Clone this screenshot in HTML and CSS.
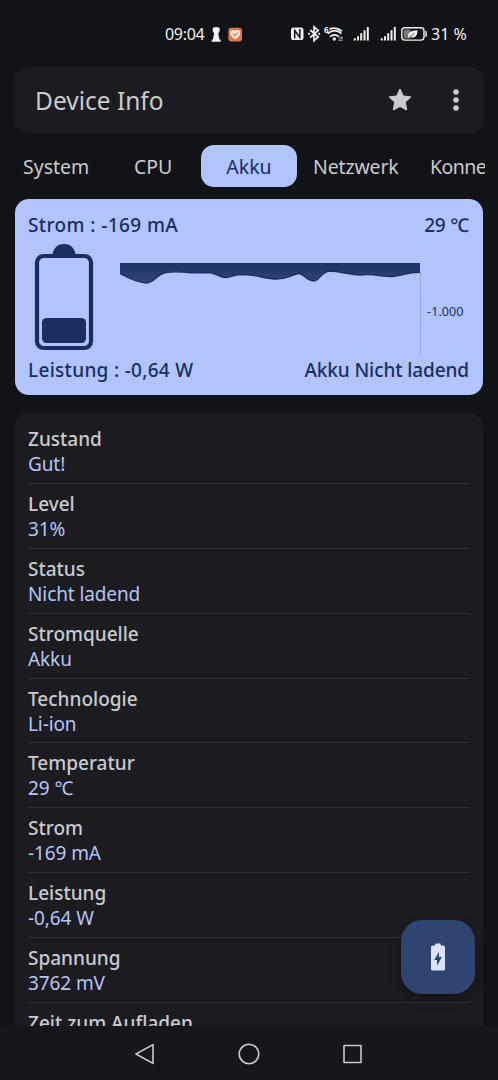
FILE: index.html
```html
<!DOCTYPE html>
<html lang="de">
<head>
<meta charset="utf-8">
<title>Device Info</title>
<link rel="stylesheet" href="styles.css">
</head>
<body>
<div class="screen">
  <div class="status">
    <span class="clock">09:04</span>
    <svg class="notify" width="34" height="20" viewBox="0 0 34 20">
      <path d="M4.600 3.200C4.600 1.800 6 1 8.200 1s3.600.8 3.600 2.200c0 1.600-.7 3-1.500 4l1.100 6.200h1.200v2.300H3.800v-2.300H5l1.100-6.200c-.8-1-1.500-2.400-1.500-4z" fill="#f3f3f5"/>
      <rect x="20.300" y="1.700" width="13.700" height="13.700" rx="3" fill="#d9774d"/>
      <path d="M27.200 13.500c-3-2-5-4-5-6.500 0-3 3.600-4 5-1.700 1.400-2.300 5-1.300 5 1.700 0 2.500-2 4.500-5 6.500z" fill="#ffe9cf"/>
      <path d="M24.900 7.700l2 2 3-3" fill="none" stroke="#c87b50" stroke-width="1.200"/>
    </svg>
    <svg class="radios" width="136" height="20" viewBox="0 0 136 20">
      <rect x="0" y="2.500" width="12.500" height="12.500" rx="2.600" fill="#efeff1"/>
      <path d="M3.700 13.500v-8l5.100 6.800V4" fill="none" stroke="#121316" stroke-width="1.500"/>
      <path d="M19.200 5l8 7-4.200 3.700V1.800L27.200 5.500l-8 7" fill="none" stroke="#efeff1" stroke-width="1.700"/>
      <circle cx="18" cy="8.800" r="1.100" fill="#efeff1"/><circle cx="28.200" cy="8.800" r="1.100" fill="#efeff1"/>
      <g fill="none" stroke="#efeff1" stroke-width="1.800"><path d="M38.500 4.200q6.500-2.700 12.500 2M36.500 8.600q7.500-6 14 0M39 11.600q4.500-3.500 9 0"/></g>
      <circle cx="43.300" cy="14" r="1.700" fill="#efeff1"/>
      <text class="wifi-generation" x="33" y="8">6</text>
      <path d="M47.500 13h4m-1.500-1.200 1.700 1.200M51.500 15.200h-4" fill="none" stroke="#efeff1" stroke-width=".8"/>
      <g fill="#efeff1"><path id="bars" d="M62.800 13.200h2v2.300h-2zM66 11.200h2v4.300h-2zM69.200 8.200h2v7.300h-2zM72.500 5.200h2v10.300h-2zM75.800 2h2v13.500h-2z"/><use href="#bars" x="27"/></g>
      <rect x="110.800" y="2.700" width="22.200" height="12.400" rx="3" fill="none" stroke="#efeff1" stroke-width="1.400"/>
      <rect x="112.600" y="4.400" width="7" height="9" rx="1" fill="#77787a"/>
      <path d="M117.500 12.700c-1.500-5.500 3-7 9-7.400 0 5.800-2.500 8.300-7 6.600l-1.200 1.200z" fill="#efeff1"/>
      <path d="M118.500 12.200l5-4" stroke="#333538" stroke-width=".8"/>
      <rect x="134.300" y="5.900" width="1.500" height="6" rx=".7" fill="#efeff1"/>
    </svg>
    <span class="percent">31 %</span>
  </div>

  <header class="appbar">
    <h1>Device Info</h1>
    <svg class="star" width="24" height="24" viewBox="0 0 24 24"><path d="M12 1.700l3 6.500 7.300.8-5.400 5 1.500 7.500L12 18l-6.400 3.500L7.100 14l-5.400-5 7.300-.8z" fill="#c9cad0" stroke="#c9cad0" stroke-width="1.600" stroke-linejoin="round"/></svg>
    <svg class="more" width="6" height="24" viewBox="0 0 6 24" fill="#c9cad0"><circle cx="3" cy="4" r="2.800"/><circle cx="3" cy="12" r="2.800"/><circle cx="3" cy="20" r="2.800"/></svg>
  </header>

  <nav class="tabs">
    <span class="tab tab-system">System</span>
    <span class="tab tab-cpu">CPU</span>
    <span class="tab tab-active">Akku</span>
    <span class="tab tab-network">Netzwerk</span>
    <span class="tab tab-connect">Konne</span>
  </nav>

  <section class="summary">
    <div class="pair"><span class="current">Strom : -169 mA</span><span class="temp">29 ℃</span></div>
    <div class="visual">
      <svg width="60" height="108" viewBox="0 0 60 108">
        <path d="M18 12C20 4 24 1 30 1s10 3 12 11z" fill="#192f60"/>
        <rect x="3" y="13" width="54" height="92" rx="6.500" fill="none" stroke="#192f60" stroke-width="4.200"/>
        <rect x="8" y="75" width="44" height="25" rx="4.500" fill="#192f60"/>
      </svg>
      <svg class="chart" width="302" height="96" viewBox="0 0 302 96">
        <defs><linearGradient id="area" x1="0" y1="0" x2="0" y2="1"><stop offset="0" stop-color="#1b3264"/><stop offset="1" stop-color="#304877"/></linearGradient></defs>
        <path d="M0 3H300V12.500C290 12 282 15.500 272 16.500C264 17.500 256 13.500 240 15C230 14.500 220 11.500 210 11C200 12 200 21 194 21C186 21 184 13 178 13.500C172 15 168 19 157 19C145 19 137 14.500 121 14.500C112 15 111 17.500 106 17.500C99 17.500 95 13 90 12.500C82 12.500 76 13.500 68 12.500C59 12 48 10.500 42 14C36 17 33 23 26 23C18 22 8 18 0 13.500Z" fill="url(#area)"/>
        <path d="M300 12.500C290 12 282 15.500 272 16.500C264 17.500 256 13.500 240 15C230 14.500 220 11.500 210 11C200 12 200 21 194 21C186 21 184 13 178 13.500C172 15 168 19 157 19C145 19 137 14.500 121 14.500C112 15 111 17.500 106 17.500C99 17.500 95 13 90 12.500C82 12.500 76 13.500 68 12.500C59 12 48 10.500 42 14C36 17 33 23 26 23C18 22 8 18 0 13.500" fill="none" stroke="#192f60" stroke-width="1.300"/>
        <path d="M300.500 12v83" stroke="#98aad8" stroke-width="1"/>
      </svg>
      <span class="axis">-1.000</span>
    </div>
    <div class="pair"><span class="power">Leistung : -0,64 W</span><span class="state">Akku Nicht ladend</span></div>
  </section>

  <section class="details">
    <div class="row"><b>Zustand</b><span>Gut!</span></div>
    <div class="row"><b>Level</b><span>31%</span></div>
    <div class="row"><b>Status</b><span>Nicht ladend</span></div>
    <div class="row"><b>Stromquelle</b><span>Akku</span></div>
    <div class="row"><b>Technologie</b><span>Li-ion</span></div>
    <div class="row"><b>Temperatur</b><span>29 ℃</span></div>
    <div class="row"><b>Strom</b><span>-169 mA</span></div>
    <div class="row"><b>Leistung</b><span>-0,64 W</span></div>
    <div class="row"><b>Spannung</b><span>3762 mV</span></div>
    <div class="row"><b>Zeit zum Aufladen</b></div>
  </section>

  <footer class="system-nav">
    <svg width="24" height="24" viewBox="0 0 24 24"><path d="M20 2.600v18.800L3 12z"/></svg>
    <svg width="24" height="24" viewBox="0 0 24 24"><circle cx="12" cy="12" r="9.800"/></svg>
    <svg width="24" height="24" viewBox="0 0 24 24"><rect x="3" y="3.500" width="17" height="17"/></svg>
  </footer>

  <div class="fab">
    <svg width="14" height="28" viewBox="0 0 14 28"><path d="M4.200 2.600V1.500q0-1 1-1h3.600q1 0 1 1v1.100h2.700q1.500 0 1.500 1.500V26q0 1.500-1.500 1.500h-11Q0 27.500 0 26V4.100q0-1.500 1.500-1.500z" fill="#dce2fb"/><path d="M8 8.700v5.200h2.900L6 22.700v-5.600H3.200z" fill="#304471"/></svg>
  </div>
</div>
</body>
</html>
```
FILE: styles.css
```css
* { box-sizing: border-box; }
body { margin: 0; background: #121316; font-family: "Noto Sans", sans-serif; }
svg { display: block; flex: none; }
.screen { position: relative; width: 498px; height: 1080px; overflow: hidden; display: flex; flex-direction: column; background: #121316; color: #c9cad0; white-space: nowrap; }
.status { height: 67px; flex: none; display: flex; align-items: center; padding: 1px 0 0 165px; font-size: 16px; color: #efeff1; }
.clock { width: 43px; letter-spacing: -.3px; }
.notify { margin-top: 3px; }
.radios { margin: 2px 0 0 49px; overflow: visible; }
.percent { margin-left: 4px; }
.wifi-generation { font: bold 8px "Noto Sans", sans-serif; fill: #efeff1; }
.appbar { height: 66px; flex: none; margin: 0 14px; padding: 0 25px 0 21px; display: flex; align-items: center; background: #1c1c20; border-radius: 14px; }
h1 { margin: 1px auto 0 0; font-size: 24.5px; line-height: 34px; font-weight: 400; }
.more { margin-left: 41px; }
.tabs { height: 66px; flex: none; margin: 0 13px; display: flex; align-items: center; overflow: hidden; font-size: 19.5px; }
.tab { flex: none; height: 42px; line-height: 43px; }
.tab-system { width: 111px; padding-left: 10px; }
.tab-cpu { width: 77px; padding-left: 10px; }
.tab-active { width: 96px; text-align: center; border-radius: 13px; background: #b1c4fb; color: #192f60; }
.tab-network { width: 120px; padding-left: 16px; letter-spacing: -.15px; }
.tab-connect { padding-left: 13px; letter-spacing: -.55px; }
.summary { height: 196px; flex: none; margin: 0 15px; padding: 12px 14px 0 13px; background: #b1c4fb; color: #192f60; border-radius: 14px; }
.pair { height: 28px; line-height: 28px; display: flex; justify-content: space-between; font-size: 19px; font-weight: 500; }
.current { letter-spacing: .4px; }
.power { letter-spacing: .3px; }
.state { letter-spacing: -.1px; }
.temp { letter-spacing: -.2px; }
.visual { height: 117px; display: flex; align-items: flex-start; padding: 4px 0 0 6px; }
.chart { margin: 17px 0 0 26px; }
.axis { margin: 60px 0 0 5px; font-size: 12.5px; line-height: 18px; letter-spacing: .1px; }
.details { height: 613px; flex: none; margin: 18px 15px 0; padding: 6px 13px 0; background: #1c1c20; border-radius: 14px 14px 0 0; overflow: hidden; }
.row { height: 64.9px; padding-top: 8px; border-bottom: 1px solid #303034; display: flex; flex-direction: column; align-items: flex-start; font-size: 19px; line-height: 25px; }
.row b { font-weight: 500; }
.row span { color: #b5c4f5; letter-spacing: -.1px; }
.system-nav { height: 54px; flex: none; display: flex; justify-content: center; align-items: center; gap: 80px; padding-top: 2px; background: #16171b; }
.system-nav svg { fill: none; stroke: #c9c9cc; stroke-width: 1.600; stroke-linejoin: round; }
.fab { position: absolute; left: 401px; top: 920px; width: 74px; height: 74px; border-radius: 21px; background: #304471; display: grid; place-items: center; box-shadow: 0 5px 12px rgba(0,0,0,.3); }
```
